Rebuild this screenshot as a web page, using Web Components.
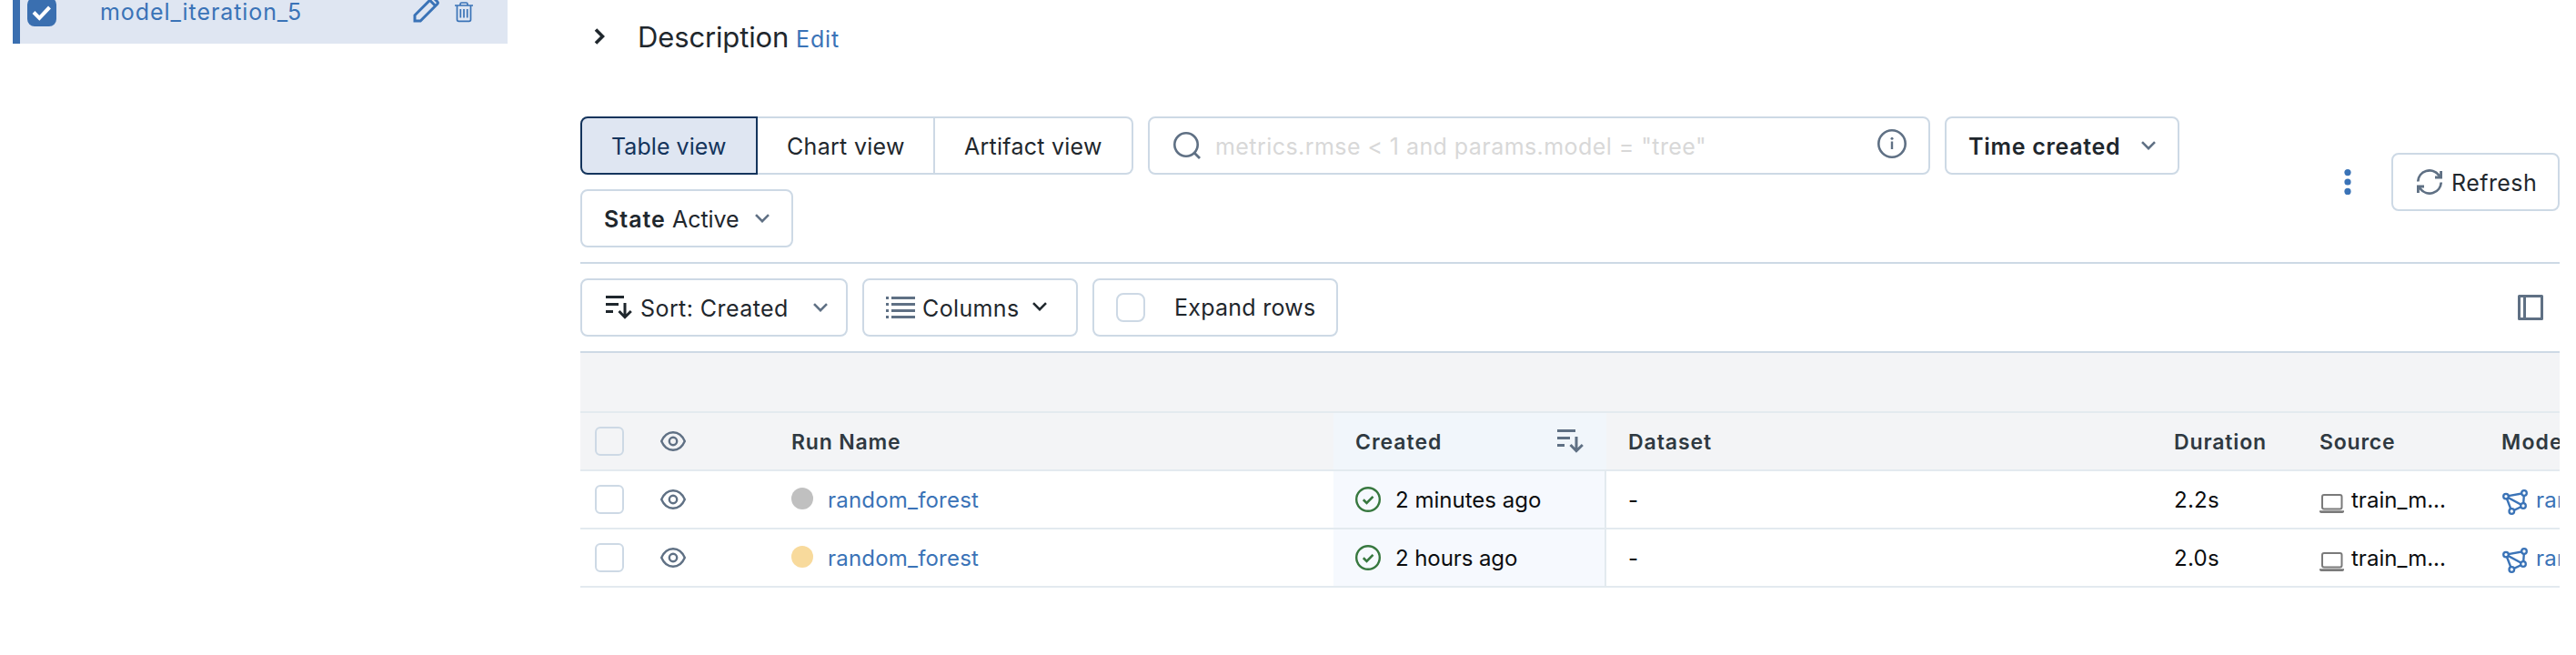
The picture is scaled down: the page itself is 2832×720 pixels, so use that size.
<!DOCTYPE html>
<html lang="en"><head><meta charset="utf-8"><title>Experiment runs</title>
<style>
body{margin:0;background:#fff;color:#1f272d;font-family:Inter,"Liberation Sans",sans-serif;width:2832px;height:720px;overflow:hidden}
</style></head><body>
<runs-page></runs-page>
<script>
const ICONS={
 pencil:['0 0 30 30','<path d="M3 27v-6.200L21.500 2.300a2 2 0 0 1 2.800 0l3.400 3.400a2 2 0 0 1 0 2.800L9.200 27zM19.500 4.300l6.200 6.200" fill="none" stroke="currentColor" stroke-width="3"/>'],
 trash:['0 0 22 23','<path d="M0 4H20M6 4V2.500Q6 1 7.500 1h5Q14 1 14 2.500V4M2.500 4V19.500Q2.500 21.300 4.300 21.300H15.700Q17.500 21.300 17.500 19.500V4M6.300 8v9.500M10 8v9.500M13.700 8v9.500" fill="none" stroke="currentColor" stroke-width="1.700"/>'],
 tick:['0 0 32 32','<path d="M7 16.500L13.300 22.800L24.500 11" fill="none" stroke="currentColor" stroke-width="4"/>'],
 right:['0 0 12 18','<path d="M2 1.500L9.500 9L2 16.500" fill="none" stroke="currentColor" stroke-width="3.600"/>'],
 down:['0 0 16 10','<path d="M1 1.200L8 8.200L15 1.200" fill="none" stroke="currentColor" stroke-width="2.600"/>'],
 search:['0 0 30 30','<circle cx="14" cy="14" r="12.700" fill="none" stroke="currentColor" stroke-width="2.600"/><path d="M23 23L29 29" stroke="currentColor" stroke-width="2.800"/>'],
 info:['0 0 32 32','<circle cx="16" cy="16" r="14.700" fill="none" stroke="currentColor" stroke-width="2.600"/><path d="M16 13.500V22" stroke="currentColor" stroke-width="2.400"/><circle cx="16" cy="10.300" r="1.500" fill="currentColor"/>'],
 dots:['0 0 8 28','<g fill="currentColor"><circle cx="4" cy="3.600" r="3.600"/><circle cx="4" cy="14" r="3.600"/><circle cx="4" cy="24.400" r="3.600"/></g>'],
 refresh:['0 0 28 28','<path d="M1.300 13.500A12.700 12.700 0 0 1 24 6.300L25.500 8.500M26.700 14.500A12.700 12.700 0 0 1 4 21.700L2.500 19.500" fill="none" stroke="currentColor" stroke-width="2.700"/><path d="M26.600 2V9H20M1.400 26V19H8" fill="none" stroke="currentColor" stroke-width="2.900"/>'],
 sort:['0 0 29 26','<path d="M0 1.500H20M0 9.500H14M0 17.500H8" stroke="currentColor" stroke-width="3"/><path d="M21 8V24M14.500 17L21 23.700L27.800 17" fill="none" stroke="currentColor" stroke-width="3"/>'],
 list:['0 0 32 24','<path d="M6 1.500H32M6 8.500H32M6 15.500H32M6 22.500H32M0 1.500H3M0 8.500H3M0 15.500H3M0 22.500H3" stroke="currentColor" stroke-width="2.800"/>'],
 panel:['0 0 28 28','<path d="M1.500 1.500H26.500V26.500H1.500ZM7.500 1.500V26.500" fill="none" stroke="currentColor" stroke-width="3" stroke-linejoin="round"/>'],
 eye:['0 0 28 22','<path d="M1.200 11C4 4.500 8.500 1.200 14 1.200S24 4.500 26.800 11C24 17.500 19.500 20.800 14 20.800S4 17.500 1.200 11Z" fill="none" stroke="currentColor" stroke-width="2.400"/><circle cx="14" cy="11" r="4.200" fill="none" stroke="currentColor" stroke-width="2.400"/>'],
 ok:['0 0 28 28','<circle cx="14" cy="14" r="12.800" fill="none" stroke="currentColor" stroke-width="2.400"/><path d="M8.800 14.300L12.500 17.900L19.500 10.900" fill="none" stroke="currentColor" stroke-width="2.600"/>'],
 laptop:['0 0 27 21','<rect x="3" y="1" width="21.500" height="15.500" rx="2" fill="none" stroke="currentColor" stroke-width="2"/><path d="M0 18.200H27V19.500Q26.500 21 25 21H2Q.5 21 0 19.500Z" fill="currentColor"/>'],
 model:['0 0 28 28','<path d="M4 7.600L24 4L23 18L10.300 24L4 7.600L23 18" fill="none" stroke="currentColor" stroke-width="2.400"/><g fill="#fff" stroke="currentColor" stroke-width="2.300"><circle cx="4" cy="7.600" r="2.800"/><circle cx="24" cy="4" r="2.800"/><circle cx="23" cy="18" r="2.800"/><circle cx="10.300" cy="24" r="2.800"/></g>']
};
const pen=document.createElement('canvas').getContext('2d');
const define=(name,render)=>customElements.define(name,class extends HTMLElement{
 constructor(){super();this.attachShadow({mode:'open'})}
 connectedCallback(){this.shadowRoot.innerHTML=render(this)}
});
define('ui-icon',el=>{
 const [box,art]=ICONS[el.getAttribute('name')],[,,w,h]=box.split(' ');
 return `<style>:host{display:block;flex:none;width:${w}px;height:${h}px}svg{display:block}</style><svg width="${w}" height="${h}" viewBox="${box}">${art}</svg>`});
/* A label whose box hugs its ink: "w" is the inked width, spread by tracking. */
define('ui-text',el=>{
 const s=el.textContent,size=el.getAttribute('size')||25,wt=el.getAttribute('weight')||400,w=+el.getAttribute('w');
 pen.font=`${wt} ${size}px Inter`;
 const m=pen.measureText(s),ink=m.actualBoundingBoxRight+m.actualBoundingBoxLeft;
 const track=s.length>1?(w-ink)/(s.length-1):0;
 return `<style>:host{display:block;flex:none;width:${w}px;height:32px;line-height:34px;font-size:${size}px;font-weight:${wt};white-space:nowrap}
 span{display:block;margin-left:${m.actualBoundingBoxLeft}px;letter-spacing:${track.toFixed(3)}px}</style><span><slot></slot></span>`});
define('ui-check',el=>`<style>:host{display:block;flex:none;box-sizing:border-box;width:32px;height:32px;border:2px solid #cdd9e5;border-radius:${el.getAttribute('r')||6}px}
 :host([checked]){background:#3a6fb0;border:0;border-radius:8px;color:#fff}</style>${el.hasAttribute('checked')?'<ui-icon name="tick"></ui-icon>':''}`);
define('ui-button',el=>`<style>:host{display:flex;flex:none;box-sizing:border-box;width:${el.getAttribute('w')}px;height:64px;align-items:center;border:2px solid #cdd9e5;border-radius:8px;padding-left:${el.getAttribute('pad')-2}px;background:#fff}
 :host([seg=first]){background:#dfe6f2;border-color:#14345c;color:#14345c;border-radius:8px 0 0 8px}
 :host([seg=mid]){border-left:0;border-radius:0;padding-left:${el.getAttribute('pad')}px}
 :host([seg=last]){border-left:0;border-radius:0 8px 8px 0;padding-left:${el.getAttribute('pad')}px}</style><slot></slot>`);
define('model-item',el=>`<style>:host{display:flex;box-sizing:border-box;width:544px;height:72px;margin-top:-24px;background:#dfe6f2;border-left:8px solid #3a6fb0;color:#3a73b7;padding:21px 0 0 8px}
 ui-text{margin:-1px 0 0 49px}.p{margin:-1px 0 0 123px}.t{margin:5px 0 0 17px}</style>
 <ui-check checked></ui-check><ui-text w="219">${el.getAttribute('label')}</ui-text><ui-icon class="p" name="pencil"></ui-icon><ui-icon class="t" name="trash"></ui-icon>`);
define('run-head',()=>`<style>:host{display:flex;height:62px;align-items:center;background:#f3f4f6;border-bottom:2px solid #e3eaef;color:#2f3941;overflow:hidden}
 .c{display:flex;align-items:center;height:100%;flex:none;box-sizing:border-box}ui-icon{color:#5f7084}</style>
 <div class="c" style="width:828px;padding-left:16px"><ui-check></ui-check><ui-icon name="eye" style="margin-left:40px"></ui-icon><ui-text size="23" weight="600" w="118" style="margin-left:117px">Run Name</ui-text></div>
 <div class="c" style="width:300px;padding-left:25px;background:#f1f6fb"><ui-text size="23" weight="600" w="92">Created</ui-text><ui-icon name="sort" style="margin-left:129px"></ui-icon></div>
 <div class="c" style="width:625px;padding-left:25px"><ui-text size="23" weight="600" w="90">Dataset</ui-text></div>
 <div class="c" style="width:160px"><ui-text size="23" weight="600" w="99">Duration</ui-text></div>
 <div class="c" style="width:200px"><ui-text size="23" weight="600" w="81">Source</ui-text></div>
 <div class="c"><ui-text size="23" weight="600" w="86">Models</ui-text></div>`);
define('run-row',el=>{const a=n=>el.getAttribute(n);return `<style>:host{display:flex;height:62px;align-items:center;border-bottom:2px solid #e3eaef;color:#0b0d0f;overflow:hidden}
 .c{display:flex;align-items:center;height:100%;flex:none;box-sizing:border-box}.g{color:#5f7084}.b{color:#3a73b7}
 .dot{width:24px;height:24px;border-radius:50%;background:${a('dot')};margin:-2px 17px 0 116px}</style>
 <div class="c" style="width:828px;padding-left:16px"><ui-check></ui-check><ui-icon class="g" name="eye" style="margin-left:40px"></ui-icon><div class="dot"></div><ui-text class="b" size="24" w="165">random_forest</ui-text></div>
 <div class="c" style="width:300px;padding-left:24px;background:#f6f9fe;border-right:2px solid #e3eaef"><ui-icon name="ok" style="color:#37783f"></ui-icon><ui-text size="24" w="${a('agew')}" style="margin-left:17px">${a('age')}</ui-text></div>
 <div class="c" style="width:625px;padding-left:25px"><ui-text size="24" w="9">-</ui-text></div>
 <div class="c" style="width:159px"><ui-text size="24" w="48">${a('time')}</ui-text></div>
 <div class="c" style="width:201px"><ui-icon name="laptop" style="color:#7a7a7a;margin-top:8px"></ui-icon><ui-text size="24" w="103" style="margin-left:8px">train_m...</ui-text></div>
 <div class="c b"><ui-icon name="model" style="margin-top:6px"></ui-icon><ui-text size="24" w="165" style="margin-left:10px">random_forest</ui-text></div>`});
define('runs-page',()=>`<style>:host{display:flex;height:720px}
 .side{width:544px;padding-left:14px;flex:none}.main{width:2176px;margin-left:80px;flex:none}
 .desc{display:flex;height:80px;align-items:center;padding-left:15px;box-sizing:border-box}
 .bar{display:flex;height:162px;margin-top:48px;border-bottom:2px solid #cdd9e5;box-sizing:border-box;justify-content:space-between}
 .filters{display:flex;flex-wrap:wrap;gap:16px;width:1860px;align-content:flex-start}
 .seg{display:flex}.act{display:flex;align-items:center;height:64px;margin-top:40px}
 .tools{display:flex;height:98px;gap:16px;align-items:center;box-sizing:border-box;border-bottom:2px solid #cdd9e5}
 .gap{height:64px;background:#f3f4f6;border-bottom:2px solid #e3eaef}.g{color:#5f7084}.blue{color:#3a73b7}</style>
 <div class="side"><model-item label="model_iteration_5"></model-item></div>
 <div class="main">
 <div class="desc"><ui-icon name="right"></ui-icon><ui-text size="31" w="162" style="margin-left:38px">Description</ui-text><ui-text class="blue" w="45" style="margin:3px 0 0 12px">Edit</ui-text></div>
 <div class="bar"><div class="filters">
  <div class="seg"><ui-button seg="first" w="195" pad="35"><ui-text w="125">Table view</ui-text></ui-button><ui-button seg="mid" w="195" pad="33"><ui-text w="128">Chart view</ui-text></ui-button><ui-button seg="last" w="218" pad="32"><ui-text w="151">Artifact view</ui-text></ui-button></div>
  <ui-button w="860" pad="28"><ui-icon class="g" name="search"></ui-icon><ui-text w="537" style="margin-left:17px;color:#d8d8d8">metrics.rmse &lt; 1 and params.model = "tree"</ui-text><ui-icon class="g" name="info" style="margin:-4px 0 0 190px"></ui-icon></ui-button>
  <ui-button w="258" pad="27"><ui-text weight="600" w="164">Time created</ui-text><ui-icon class="g" name="down" style="margin-left:25px"></ui-icon></ui-button>
  <ui-button w="234" pad="27"><ui-text weight="600" w="65">State</ui-text><ui-text w="73" style="margin-left:9px">Active</ui-text><ui-icon class="g" name="down" style="margin-left:18px"></ui-icon></ui-button>
 </div><div class="act"><ui-icon class="blue" name="dots" style="margin-right:44px"></ui-icon><ui-button w="185" pad="28"><ui-icon class="g" name="refresh"></ui-icon><ui-text w="90" style="margin-left:12px">Refresh</ui-text></ui-button></div></div>
 <div class="tools"><ui-button w="294" pad="28"><ui-icon name="sort"></ui-icon><ui-text w="160" style="margin:0 0 0 10px">Sort: Created</ui-text><ui-icon class="g" name="down" style="margin-left:29px"></ui-icon></ui-button>
 <ui-button w="237" pad="26"><ui-icon class="g" name="list"></ui-icon><ui-text w="104" style="margin:0 0 0 9px">Columns</ui-text><ui-icon name="down" style="margin:-3px 0 0 16px"></ui-icon></ui-button>
 <ui-button w="270" pad="26"><ui-check r="8"></ui-check><ui-text w="152" style="margin:-2px 0 0 34px">Expand rows</ui-text></ui-button>
 <ui-icon class="g" name="panel" style="margin:0 18px 0 auto"></ui-icon></div>
 <div class="gap"></div>
 <run-head></run-head>
 <run-row dot="#c0c0c0" age="2 minutes ago" agew="159" time="2.2s"></run-row>
 <run-row dot="#f8da9c" age="2 hours ago" agew="133" time="2.0s"></run-row>
 </div>`);
</script></body></html>
